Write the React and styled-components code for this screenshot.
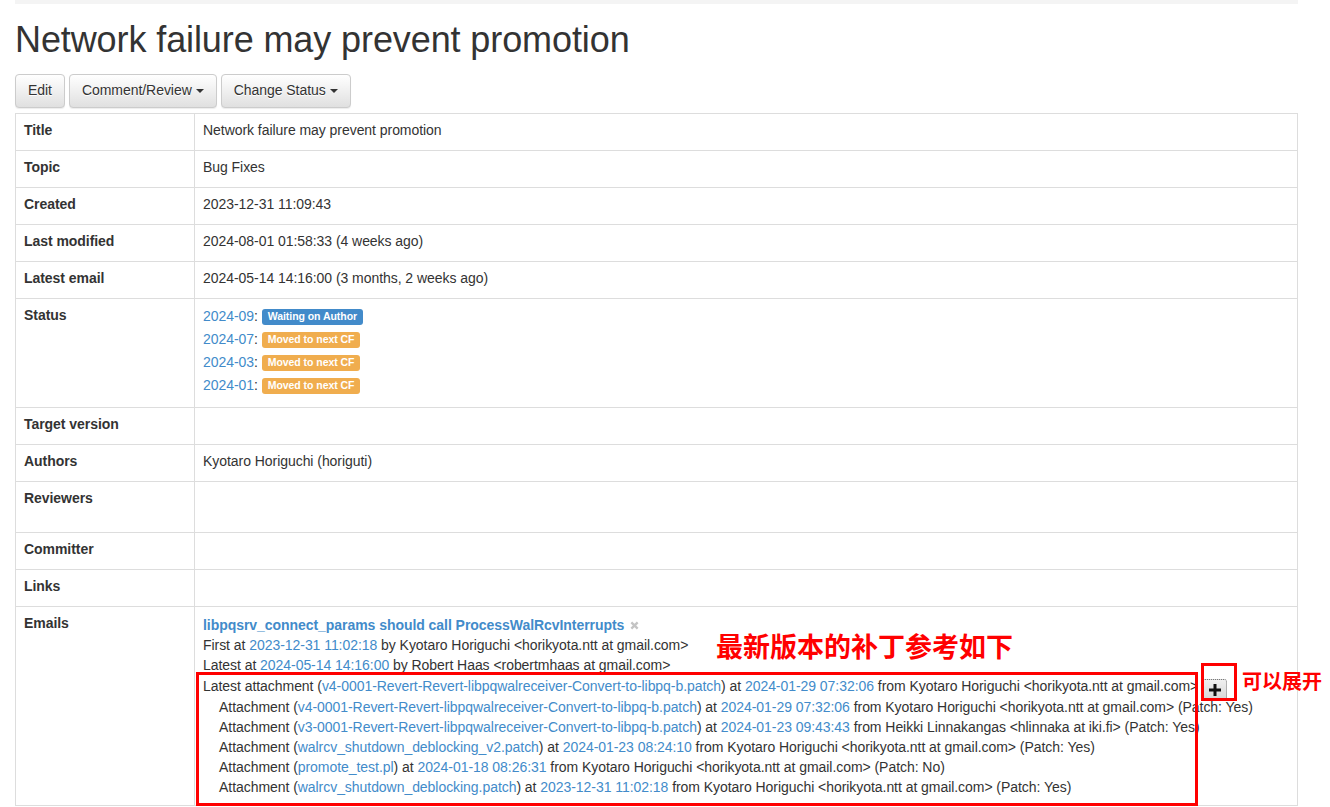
import React from "react"
import styled, { createGlobalStyle } from "styled-components"

const GlobalStyle = createGlobalStyle`
  html, body {
    margin: 0;
    padding: 0;
    background: #fff;
  }
  body {
    font-family: "Liberation Sans", Arial, sans-serif;
    font-size: 14px;
    line-height: 20px;
    letter-spacing: -0.05px;
    color: #333;
  }
`

const statuses = [
  { cf: "2024-09", text: "Waiting on Author", kind: "primary" },
  { cf: "2024-07", text: "Moved to next CF", kind: "warning" },
  { cf: "2024-03", text: "Moved to next CF", kind: "warning" },
  { cf: "2024-01", text: "Moved to next CF", kind: "warning" },
]

const attachments = [
  { file: "v4-0001-Revert-Revert-libpqwalreceiver-Convert-to-libpq-b.patch", at: "2024-01-29 07:32:06", from: "Kyotaro Horiguchi <horikyota.ntt at gmail.com>", patch: "Yes" },
  { file: "v3-0001-Revert-Revert-libpqwalreceiver-Convert-to-libpq-b.patch", at: "2024-01-23 09:43:43", from: "Heikki Linnakangas <hlinnaka at iki.fi>", patch: "Yes" },
  { file: "walrcv_shutdown_deblocking_v2.patch", at: "2024-01-23 08:24:10", from: "Kyotaro Horiguchi <horikyota.ntt at gmail.com>", patch: "Yes" },
  { file: "promote_test.pl", at: "2024-01-18 08:26:31", from: "Kyotaro Horiguchi <horikyota.ntt at gmail.com>", patch: "No" },
  { file: "walrcv_shutdown_deblocking.patch", at: "2023-12-31 11:02:18", from: "Kyotaro Horiguchi <horikyota.ntt at gmail.com>", patch: "Yes" },
]

const App = () => {
  return (
    <Page>
      <GlobalStyle />
      <TopBar />
      <Heading>Network failure may prevent promotion</Heading>
      <Toolbar>
        <Button>Edit</Button>
        <Button>Comment/Review <Caret /></Button>
        <Button>Change Status <Caret /></Button>
      </Toolbar>
      <Table>
        <tbody>
          <tr><Th>Title</Th><Td>Network failure may prevent promotion</Td></tr>
          <tr><Th>Topic</Th><Td>Bug Fixes</Td></tr>
          <tr><Th>Created</Th><Td>2023-12-31 11:09:43</Td></tr>
          <tr><Th>Last modified</Th><Td>2024-08-01 01:58:33 (4 weeks ago)</Td></tr>
          <tr><Th>Latest email</Th><Td>2024-05-14 14:16:00 (3 months, 2 weeks ago)</Td></tr>
          <tr>
            <Th>Status</Th>
            <Td>
              {statuses.map((s) => (
                <StatusLine key={s.cf}>
                  <Link>{s.cf}</Link>: <Label $kind={s.kind}>{s.text}</Label>
                </StatusLine>
              ))}
            </Td>
          </tr>
          <tr><Th>Target version</Th><Td></Td></tr>
          <tr><Th>Authors</Th><Td>Kyotaro Horiguchi (horiguti)</Td></tr>
          <tr><Th>Reviewers</Th><Td><Tall /></Td></tr>
          <tr><Th>Committer</Th><Td></Td></tr>
          <tr><Th>Links</Th><Td></Td></tr>
          <tr>
            <Th>Emails</Th>
            <Td $flat>
              <ThreadTitle>
                <Link $bold>libpqsrv_connect_params should call ProcessWalRcvInterrupts</Link>
                <RemoveIcon viewBox="0 0 10 10">
                  <path d="M1.5 1.5 L8.5 8.5 M8.5 1.5 L1.5 8.5" stroke="#c4c4c4" strokeWidth="2.6" />
                </RemoveIcon>
              </ThreadTitle>
              <Line>First at <Link>2023-12-31 11:02:18</Link> by Kyotaro Horiguchi &lt;horikyota.ntt at gmail.com&gt;</Line>
              <Line>Latest at <Link>2024-05-14 14:16:00</Link> by Robert Haas &lt;robertmhaas at gmail.com&gt;</Line>
              <Line $tall>
                Latest attachment (<Link>v4-0001-Revert-Revert-libpqwalreceiver-Convert-to-libpq-b.patch</Link>) at <Link>2024-01-29 07:32:06</Link> from Kyotaro Horiguchi &lt;horikyota.ntt at gmail.com&gt;
                <SmallButton>
                  <svg width="12" height="12" viewBox="0 0 12 12">
                    <rect x="4.5" y="0" width="3" height="12" fill="#111" />
                    <rect x="0" y="4.5" width="12" height="3" fill="#111" />
                  </svg>
                </SmallButton>
              </Line>
              {attachments.map((a) => (
                <Line key={a.file} $indent>
                  Attachment (<Link>{a.file}</Link>) at <Link>{a.at}</Link> from {a.from} (Patch: {a.patch})
                </Line>
              ))}
            </Td>
          </tr>
        </tbody>
      </Table>

      <Note $top={631} $left={716} $size={27}>最新版本的补丁参考如下</Note>
      <Note $top={670} $left={1242} $size={20}>可以展开</Note>
      <Mark $top={672} $left={196} $w={1002} $h={134} />
      <Mark $top={663} $left={1201} $w={36} $h={38} />
    </Page>
  )
}

export default App

// styles

const Page = styled.div`
  position: relative;
  padding: 0 32px 0 15px;
  height: 807px;
  overflow: hidden;
`

const TopBar = styled.div`
  height: 4px;
  background: #f4f4f4;
`

const Heading = styled.h1`
  margin: 16px 0 0;
  font-size: 36px;
  font-weight: 400;
  line-height: 40px;
  letter-spacing: -0.1px;
  color: #333;
`

const Toolbar = styled.div`
  display: flex;
  gap: 4px;
  margin-top: 14px;
`

const Button = styled.button`
  height: 34px;
  padding: 5px 12px 7px;
  font-family: "Liberation Sans", Arial, sans-serif;
  font-size: 14px;
  line-height: 20px;
  letter-spacing: -0.05px;
  color: #333;
  background-image: linear-gradient(to bottom, #fff 0, #e0e0e0 100%);
  border: 1px solid #ccc;
  border-radius: 4px;
  text-shadow: 0 1px 0 #fff;
  box-shadow: inset 0 1px 0 rgba(255, 255, 255, 0.15), 0 1px 1px rgba(0, 0, 0, 0.075);
  display: flex;
  align-items: center;
  gap: 4px;
`

const Caret = styled.span`
  display: inline-block;
  width: 0;
  height: 0;
  border-top: 4px solid #333;
  border-left: 4px solid transparent;
  border-right: 4px solid transparent;
  margin-top: 2px;
`

const Table = styled.table`
  width: 100%;
  margin-top: 5px;
  border-collapse: collapse;
  border: 1px solid #ddd;
`

const Th = styled.th`
  width: 162px;
  padding: 6px 8px 10px;
  text-align: left;
  vertical-align: top;
  font-weight: 700;
  border: 1px solid #ddd;
  line-height: 20px;
`

const Td = styled.td`
  padding: ${(p) => (p.$flat ? "8px" : "6px 8px 10px")};
  vertical-align: top;
  border: 1px solid #ddd;
  line-height: 20px;
  height: 20px;
`

const Link = styled.a`
  color: #428bca;
  text-decoration: none;
  font-weight: ${(p) => (p.$bold ? 700 : 400)};
`

const StatusLine = styled.div`
  height: 20px;
  margin-bottom: 3px;
  &:first-child {
    margin-top: 1px;
  }
  &:last-child {
    margin-bottom: 2px;
  }
`

const Label = styled.span`
  display: inline-block;
  padding: 2px 6px 3px;
  font-size: 10.5px;
  font-weight: 700;
  line-height: 1;
  color: #fff;
  border-radius: 3px;
  vertical-align: 1px;
  background: ${(p) => (p.$kind === "primary" ? "#428bca" : "#f0ad4e")};
`

const Tall = styled.div`
  height: 34px;
`

const ThreadTitle = styled.div`
  display: flex;
  align-items: center;
  gap: 6px;
  height: 20px;
`

const RemoveIcon = styled.svg`
  width: 9px;
  height: 9px;
  margin-top: 1px;
`

const Line = styled.div`
  white-space: nowrap;
  height: ${(p) => (p.$tall ? "22px" : "20px")};
  line-height: ${(p) => (p.$tall ? "22px" : "20px")};
  padding-left: ${(p) => (p.$indent ? "16px" : "0")};
`

const SmallButton = styled.span`
  display: inline-flex;
  align-items: center;
  justify-content: center;
  width: 23px;
  height: 20px;
  margin-left: 4px;
  vertical-align: -5px;
  background-image: linear-gradient(to bottom, #f0f0f0 0, #d6d6d6 100%);
  border: 1px dotted #7a7a7a;
  border-radius: 3px;
`

const Note = styled.div`
  position: absolute;
  top: ${(p) => p.$top}px;
  left: ${(p) => p.$left}px;
  font-family: "Noto Sans CJK SC", sans-serif;
  font-size: ${(p) => p.$size}px;
  font-weight: 700;
  line-height: 1.1;
  letter-spacing: 0;
  color: #f00;
  white-space: nowrap;
`

const Mark = styled.div`
  position: absolute;
  top: ${(p) => p.$top}px;
  left: ${(p) => p.$left}px;
  width: ${(p) => p.$w}px;
  height: ${(p) => p.$h}px;
  box-sizing: border-box;
  border: 3px solid #f00;
`
